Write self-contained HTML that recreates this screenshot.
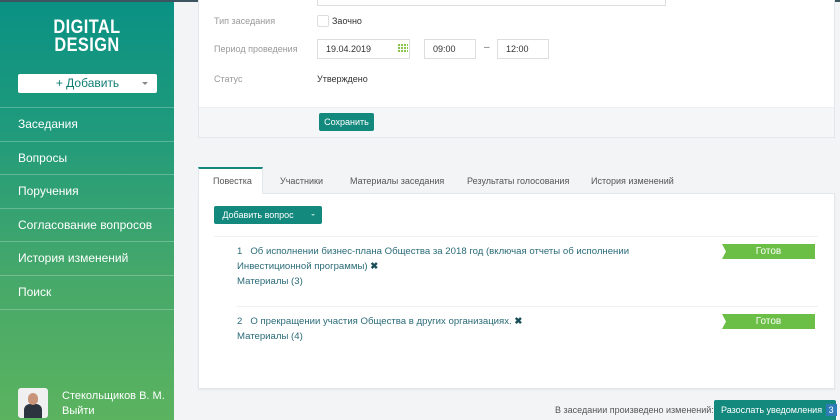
<!DOCTYPE html>
<html><head><meta charset="utf-8"><style>
*{box-sizing:border-box;margin:0;padding:0}
html,body{width:840px;height:420px;overflow:hidden}
body{background:#f2f4f6;font-family:"Liberation Sans",sans-serif;position:relative}
.abs{position:absolute;white-space:nowrap}
.sb{left:0;top:0;width:174px;height:420px;background:linear-gradient(#0a9184,#1f9a7c 30%,#45a86a 65%,#5bb35f)}
.topbar{left:0;top:0;width:840px;height:2px;background:#3d5560}
.logo{left:47px;top:19px;color:#fff;font-weight:bold;font-size:19px;line-height:18px;letter-spacing:0.5px;width:80px;text-align:center;transform:scaleX(.86)}
.add{left:18px;top:74px;width:139px;height:19px;background:#fff;border-radius:2px;color:#117e74;font-size:12px;text-align:center;line-height:19px}
.add:after{content:"";position:absolute;right:9px;top:8px;border:3px solid transparent;border-top-color:#888}
.nav{left:0;width:174px;height:34px;border-top:1px solid rgba(255,255,255,.25);color:#fff;font-size:12px;line-height:33px;padding-left:18px}
.card{background:#fff;border:1px solid #e3e7ec}
.lbl{color:#999;font-size:9px}
.inp{background:#fff;border:1px solid #ddd;font-size:9px;color:#333;height:20px;line-height:18px;padding-left:8px}
.btn{background:#13897e;color:#fff;font-size:9px;border-radius:2px;text-align:center}
.tab{top:167px;height:26px;font-size:9px;color:#555;line-height:28px}
.q{font-size:9.6px;color:#2a6b78;line-height:15px;white-space:normal}
.st{width:93px;height:15px;background:#6cbf46;color:#fff;font-size:10px;line-height:15px;text-align:center;clip-path:polygon(0 0,100% 0,100% 100%,0 100%,4px 50%)}
.x{color:#1a4f5a;font-weight:bold}
</style></head><body>
<div class="abs sb"></div>
<div class="abs topbar"></div>
<div class="abs logo">DIGITAL<br>DESIGN</div>
<div class="abs add">+ Добавить</div>
<div class="abs nav" style="top:107px">Заседания</div>
<div class="abs nav" style="top:141px">Вопросы</div>
<div class="abs nav" style="top:174px">Поручения</div>
<div class="abs nav" style="top:208px">Согласование вопросов</div>
<div class="abs nav" style="top:241px">История изменений</div>
<div class="abs nav" style="top:275px">Поиск</div>
<div class="abs nav" style="top:309px;height:2px"></div>
<div class="abs" style="left:18px;top:388px;width:30px;height:30px;border-radius:3px;background:#f0f0f0;overflow:hidden"><div style="position:absolute;left:6px;top:16px;width:18px;height:14px;background:#2c3440;border-radius:6px 6px 0 0"></div><div style="position:absolute;left:10px;top:5px;width:10px;height:12px;background:#c9957a;border-radius:5px"></div></div>
<div class="abs" style="left:62px;top:389px;color:#fff;font-size:11px;line-height:15px">Стекольщиков В. М.<br>Выйти</div>

<div class="abs card" style="left:198px;top:-2px;width:637px;height:140px"></div>
<div class="abs" style="left:199px;top:107px;width:635px;height:30px;background:#f4f6f8;border-top:1px solid #eceff2"></div>
<div class="abs inp" style="left:317px;top:-14px;width:349px"></div>
<div class="abs lbl" style="left:214px;top:16px">Тип заседания</div>
<div class="abs" style="left:317px;top:15px;width:12px;height:12px;border:1px solid #ddd;border-radius:2px"></div>
<div class="abs" style="left:332px;top:16px;font-size:9px;color:#333">Заочно</div>
<div class="abs lbl" style="left:214px;top:44px">Период проведения</div>
<div class="abs inp" style="left:317px;top:39px;width:93px">19.04.2019</div>
<div class="abs" style="left:398px;top:44px;width:10px;height:8px;background:repeating-linear-gradient(90deg,#8bc34a 0 2px,transparent 2px 3px);-webkit-mask:repeating-linear-gradient(#000 0 2px,transparent 2px 3px)"></div>
<div class="abs inp" style="left:424px;top:39px;width:52px">09:00</div>
<div class="abs" style="left:484px;top:42px;font-size:10px;color:#666">–</div>
<div class="abs inp" style="left:497px;top:39px;width:52px">12:00</div>
<div class="abs lbl" style="left:214px;top:74px">Статус</div>
<div class="abs" style="left:317px;top:74px;font-size:9px;color:#333">Утверждено</div>
<div class="abs btn" style="left:319px;top:113px;width:55px;height:18px;line-height:18px">Сохранить</div>

<div class="abs card" style="left:198px;top:193px;width:637px;height:196px;border-top:none;box-shadow:0 1px 2px rgba(0,0,0,.06)"></div>
<div class="abs" style="left:198px;top:193px;width:637px;height:1px;background:#e3e7ec"></div>
<div class="abs" style="left:198px;top:167px;width:65px;height:27px;background:#fff;border:1px solid #e3e7ec;border-bottom:none;border-top:2px solid #13897e"></div>
<div class="abs tab" style="left:213px">Повестка</div>
<div class="abs tab" style="left:280px">Участники</div>
<div class="abs tab" style="left:350px">Материалы заседания</div>
<div class="abs tab" style="left:467px">Результаты голосования</div>
<div class="abs tab" style="left:591px">История изменений</div>
<div class="abs btn" style="left:214px;top:206px;width:108px;height:18px;line-height:18px;padding-right:20px">Добавить вопрос</div>
<div class="abs" style="left:311px;top:214px;border:2.5px solid transparent;border-top-color:#9fd3cd"></div>
<div class="abs" style="left:214px;top:236px;width:604px;height:1px;background:#eef0f2"></div>
<div class="abs q" style="left:237px;top:244px;width:420px">1&nbsp;&nbsp;&nbsp;Об исполнении бизнес-плана Общества за 2018 год (включая отчеты об исполнении Инвестиционной программы) <span class="x">✖</span><br>Материалы (3)</div>
<div class="abs st" style="left:722px;top:244px">Готов</div>
<div class="abs" style="left:237px;top:306px;width:581px;height:1px;background:#eef0f2"></div>
<div class="abs q" style="left:237px;top:314px;width:420px">2&nbsp;&nbsp;&nbsp;О прекращении участия Общества в других организациях. <span class="x">✖</span><br>Материалы (4)</div>
<div class="abs st" style="left:722px;top:314px">Готов</div>

<div class="abs" style="left:555px;top:405px;font-size:9px;color:#555">В заседании произведено изменений: 3</div>
<div class="abs btn" style="left:714px;top:400px;width:122px;height:22px;line-height:20px;text-align:left;padding-left:7px;font-size:9px">Разослать уведомления <span style="background:#2e7bb8;padding:1px 3px;margin-left:1px">3</span></div>
</body></html>
